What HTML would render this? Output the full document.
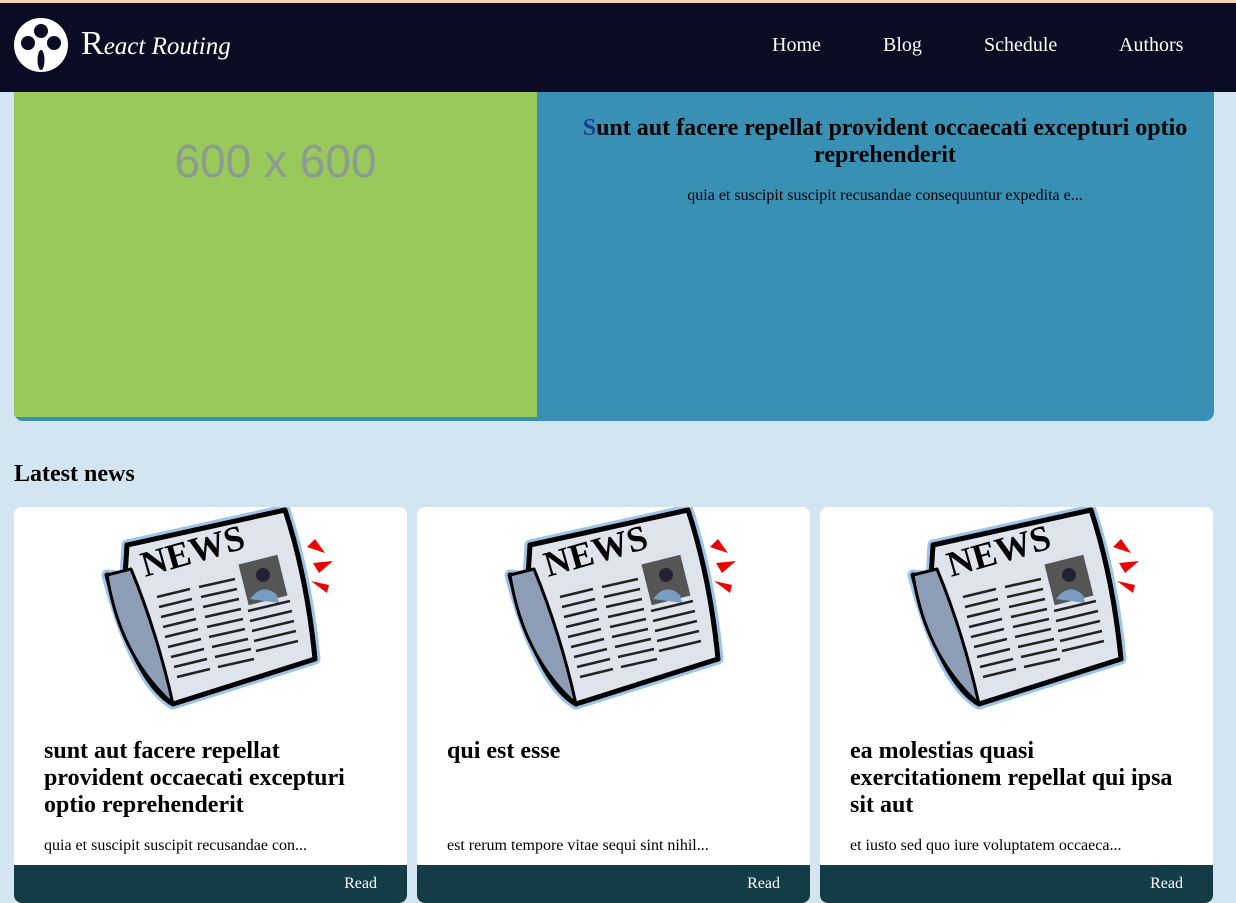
<!DOCTYPE html>
<html><head><meta charset="utf-8"><style>
*{margin:0;padding:0;box-sizing:border-box}
body{width:1236px;height:903px;overflow:hidden;background:#d4e5f2;font-family:"Liberation Serif",serif;position:relative}
.nav{position:absolute;left:0;top:0;width:1236px;height:92px;background:#0b0b23;border-top:3px solid #f3d3b0}
.logo{position:absolute;left:14px;top:15px}
.brand{position:absolute;left:81px;top:22px;color:#fff;font-style:italic;font-size:25px}
.brand b{font-weight:normal;font-style:normal;font-size:34px}
.nav a{position:absolute;top:31px;color:#fff;font-size:20px;text-decoration:none}
.hero{position:absolute;left:14px;top:92px;width:1200px;height:329px;background:#3890b4;border-radius:0 0 9px 9px;overflow:hidden}
.green{position:absolute;left:0;top:0;width:523px;height:325px;background:#98c95a;color:#8c9a91;font-family:"Liberation Sans",sans-serif;font-size:46px;text-align:center;padding-top:42px}
.ht{position:absolute;left:541px;top:23px;width:660px;text-align:center;font-weight:bold;font-size:24px;line-height:27px}
.ht span{color:#1f3c8e}
.hp{position:absolute;left:541px;top:95px;width:660px;text-align:center;font-size:16px}
h2{position:absolute;left:14px;top:461px;font-size:24px}
.card{position:absolute;top:507px;width:393px;height:396px;background:#fff;border-radius:8px;overflow:hidden}
.card svg{position:absolute;left:81px;top:0}
.card h3{position:absolute;left:30px;top:231px;width:330px;font-size:24px;line-height:27px}
.card p{position:absolute;left:30px;top:330px;font-size:16px}
.foot{position:absolute;left:0;bottom:0;width:100%;height:38px;background:#143c47;color:#fff;font-size:16px;text-align:right;padding:10px 30px 0 0}
</style></head><body>
<div class="nav">
<svg class="logo" width="54" height="54" viewBox="0 0 54 54"><circle cx="27" cy="27" r="27" fill="#fff"/><circle cx="27" cy="13" r="7" fill="#0b0b23"/><circle cx="14" cy="25" r="7" fill="#0b0b23"/><circle cx="40" cy="25" r="7" fill="#0b0b23"/><ellipse cx="27" cy="42" rx="3.5" ry="10" fill="#0b0b23"/></svg>
<div class="brand"><b>R</b>eact Routing</div>
<a style="left:772px">Home</a><a style="left:883px">Blog</a><a style="left:984px">Schedule</a><a style="left:1119px">Authors</a>
</div>
<div class="hero"><div class="green">600 x 600</div>
<div class="ht"><span>S</span>unt aut facere repellat provident occaecati excepturi optio reprehenderit</div>
<div class="hp">quia et suscipit suscipit recusandae consequuntur expedita e...</div></div>
<h2>Latest news</h2>

<div class="card" style="left:14px">
<svg width="240" height="205" viewBox="0 0 240 205"><g stroke-linejoin="round"><path d="M12,68 L30,70 L32,38 L190,3 Q212,70 220,152 L78,197 Q40,175 12,68Z" fill="none" stroke="#9cc3e8" stroke-width="11"/><path d="M12,68 L30,70 L32,38 L190,3 Q212,70 220,152 L78,197 Q40,175 12,68Z" fill="#dfe4ec" stroke="#000" stroke-width="5"/><path d="M12,68 Q25,150 78,197 Q62,125 36,62Z" fill="#8e9db6" stroke="#000" stroke-width="3"/></g><text x="50" y="70" transform="rotate(-16 50 70)" font-family="Liberation Serif" font-weight="bold" font-size="36">NEWS</text><rect x="148" y="52" width="40" height="42" fill="#555" transform="rotate(-14 168 73)"/><circle cx="168" cy="68" r="7" fill="#223"/><path d="M155,92 Q168,75 182,88 L184,96 Z" fill="#7a9cc2"/><g stroke="#222" stroke-width="2.5"><path d="M62,90 L95,82 M64,100 L97,92 M66,110 L99,102 M68,120 L101,112 M70,130 L103,122 M73,140 L106,132 M76,150 L109,142 M79,160 L112,152 M82,170 L115,162 M104,80 L140,72 M106,90 L142,82 M108,100 L144,92 M110,110 L146,102 M112,120 L148,112 M114,130 L150,122 M117,140 L153,132 M120,150 L156,142 M123,160 L159,152 M153,104 L195,94 M155,114 L197,104 M157,124 L199,114 M159,134 L201,124 M161,144 L203,134"/></g><path d="M220,32 L230,46 L212,40Z M218,56 L238,54 L224,66Z M216,74 L232,86 L234,78Z" fill="#e00"/></svg>
<h3>sunt aut facere repellat provident occaecati excepturi optio reprehenderit</h3>
<p>quia et suscipit suscipit recusandae con...</p><div class="foot">Read</div></div>

<div class="card" style="left:417px">
<svg width="240" height="205" viewBox="0 0 240 205"><g stroke-linejoin="round"><path d="M12,68 L30,70 L32,38 L190,3 Q212,70 220,152 L78,197 Q40,175 12,68Z" fill="none" stroke="#9cc3e8" stroke-width="11"/><path d="M12,68 L30,70 L32,38 L190,3 Q212,70 220,152 L78,197 Q40,175 12,68Z" fill="#dfe4ec" stroke="#000" stroke-width="5"/><path d="M12,68 Q25,150 78,197 Q62,125 36,62Z" fill="#8e9db6" stroke="#000" stroke-width="3"/></g><text x="50" y="70" transform="rotate(-16 50 70)" font-family="Liberation Serif" font-weight="bold" font-size="36">NEWS</text><rect x="148" y="52" width="40" height="42" fill="#555" transform="rotate(-14 168 73)"/><circle cx="168" cy="68" r="7" fill="#223"/><path d="M155,92 Q168,75 182,88 L184,96 Z" fill="#7a9cc2"/><g stroke="#222" stroke-width="2.5"><path d="M62,90 L95,82 M64,100 L97,92 M66,110 L99,102 M68,120 L101,112 M70,130 L103,122 M73,140 L106,132 M76,150 L109,142 M79,160 L112,152 M82,170 L115,162 M104,80 L140,72 M106,90 L142,82 M108,100 L144,92 M110,110 L146,102 M112,120 L148,112 M114,130 L150,122 M117,140 L153,132 M120,150 L156,142 M123,160 L159,152 M153,104 L195,94 M155,114 L197,104 M157,124 L199,114 M159,134 L201,124 M161,144 L203,134"/></g><path d="M220,32 L230,46 L212,40Z M218,56 L238,54 L224,66Z M216,74 L232,86 L234,78Z" fill="#e00"/></svg>
<h3>qui est esse</h3>
<p>est rerum tempore vitae sequi sint nihil...</p><div class="foot">Read</div></div>

<div class="card" style="left:820px">
<svg width="240" height="205" viewBox="0 0 240 205"><g stroke-linejoin="round"><path d="M12,68 L30,70 L32,38 L190,3 Q212,70 220,152 L78,197 Q40,175 12,68Z" fill="none" stroke="#9cc3e8" stroke-width="11"/><path d="M12,68 L30,70 L32,38 L190,3 Q212,70 220,152 L78,197 Q40,175 12,68Z" fill="#dfe4ec" stroke="#000" stroke-width="5"/><path d="M12,68 Q25,150 78,197 Q62,125 36,62Z" fill="#8e9db6" stroke="#000" stroke-width="3"/></g><text x="50" y="70" transform="rotate(-16 50 70)" font-family="Liberation Serif" font-weight="bold" font-size="36">NEWS</text><rect x="148" y="52" width="40" height="42" fill="#555" transform="rotate(-14 168 73)"/><circle cx="168" cy="68" r="7" fill="#223"/><path d="M155,92 Q168,75 182,88 L184,96 Z" fill="#7a9cc2"/><g stroke="#222" stroke-width="2.5"><path d="M62,90 L95,82 M64,100 L97,92 M66,110 L99,102 M68,120 L101,112 M70,130 L103,122 M73,140 L106,132 M76,150 L109,142 M79,160 L112,152 M82,170 L115,162 M104,80 L140,72 M106,90 L142,82 M108,100 L144,92 M110,110 L146,102 M112,120 L148,112 M114,130 L150,122 M117,140 L153,132 M120,150 L156,142 M123,160 L159,152 M153,104 L195,94 M155,114 L197,104 M157,124 L199,114 M159,134 L201,124 M161,144 L203,134"/></g><path d="M220,32 L230,46 L212,40Z M218,56 L238,54 L224,66Z M216,74 L232,86 L234,78Z" fill="#e00"/></svg>
<h3>ea molestias quasi exercitationem repellat qui ipsa sit aut</h3>
<p>et iusto sed quo iure voluptatem occaeca...</p><div class="foot">Read</div></div>
</body></html>
